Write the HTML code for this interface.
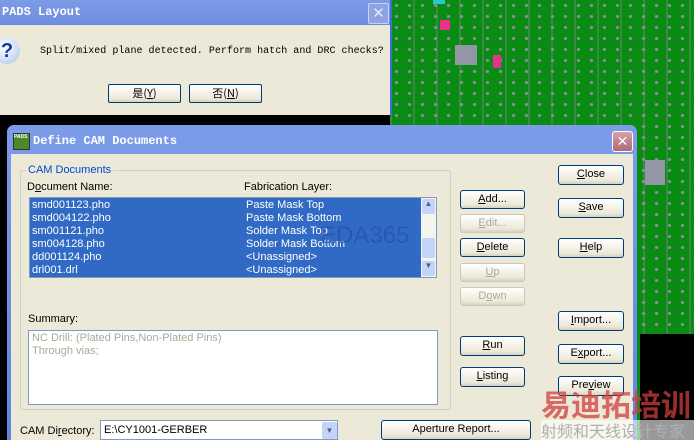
<!DOCTYPE html><html style="overflow:hidden;width:694px;height:440px"><head><style>
body{margin:0;width:694px;height:440px;overflow:hidden;position:relative;background:#000;font-family:"Liberation Sans",sans-serif;font-size:11px}
.a{position:absolute;white-space:nowrap}
.pcb{left:390px;top:0;width:304px;height:440px;background:#0a8c14;background-image:radial-gradient(#8a8f9a 1.5px,transparent 2px),linear-gradient(90deg,rgba(140,140,150,.35) 2px,transparent 2px);background-size:13px 11px,23px 19px}
.btn{position:absolute;background:linear-gradient(#fff,#ece9d8 80%,#d6d0c0);border:1px solid #003c74;border-radius:3px;text-align:center;font-size:11px;color:#000;box-sizing:border-box;line-height:17px;white-space:nowrap}
.dis{color:#aca899;border-color:#c9c7ba}
.mono{font-family:"Liberation Mono",monospace}
</style></head><body>
<div class="a pcb"></div>
<div class="a" style="left:433px;top:0;width:12px;height:4px;background:#2cc"></div>
<div class="a" style="left:440px;top:20px;width:10px;height:10px;background:#e83090"></div>
<div class="a" style="left:493px;top:55px;width:8px;height:13px;background:#e83090"></div>
<div class="a" style="left:455px;top:45px;width:22px;height:20px;background:#9595a8"></div>
<div class="a" style="left:645px;top:160px;width:20px;height:25px;background:#9595a8"></div>
<div class="a" style="left:640px;top:334px;width:54px;height:106px;background:#000"></div>
<!-- PADS dialog -->
<div class="a" style="left:0;top:0;width:390px;height:115px;background:#ece9d8;border-right:2px solid #3a6ed8"></div>
<div class="a mono" style="left:0;top:0;width:388px;height:25px;background:linear-gradient(#7e9be6,#6f8de0);color:#fff;font-weight:bold;font-size:12px;line-height:25px;padding-left:2px">PADS Layout</div>
<div class="a" style="left:368px;top:3px;width:19px;height:19px;background:#8ea4e0;border:1px solid #c8d4f4;border-radius:2px;color:#e4e8f8;text-align:center;line-height:19px;font-size:15px">✕</div>
<div class="a" style="left:-6px;top:38px;width:26px;height:26px;border-radius:50%;background:radial-gradient(circle at 40% 35%,#fff,#a8c4ec);color:#1a3a9a;font-weight:bold;font-size:20px;line-height:26px;text-align:center">?</div>
<div class="a mono" style="left:40px;top:46px;font-size:10px;letter-spacing:0.03px">Split/mixed plane detected. Perform hatch and DRC checks?</div>
<div class="btn" style="left:108px;top:84px;width:73px;height:19px;border-radius:2px;font-family:'Noto Sans CJK SC',sans-serif">是(<u>Y</u>)</div>
<div class="btn" style="left:189px;top:84px;width:73px;height:19px;border-radius:2px;font-family:'Noto Sans CJK SC',sans-serif">否(<u>N</u>)</div>
<!-- CAM dialog -->
<div class="a" style="left:7px;top:125px;width:630px;height:315px;background:linear-gradient(#7c9ce8,#5f86e0);border-radius:7px 7px 0 0"></div>
<div class="a" style="left:11px;top:154px;width:622px;height:286px;background:#ece9d8"></div>
<div class="a" style="left:13px;top:133px;width:15px;height:15px;background:#4a8a2a;border:1px solid #333;font-size:5px;color:#fff;font-weight:bold">PADS</div>
<div class="a mono" style="left:33px;top:134px;color:#fff;font-weight:bold;font-size:12px">Define CAM Documents</div>
<div class="a" style="left:612px;top:131px;width:19px;height:19px;background:linear-gradient(#d8a0a8,#b06878);border:1px solid #fff;border-radius:3px;color:#fff;text-align:center;line-height:19px;font-size:14px">✕</div>
<div class="a" style="left:20px;top:170px;width:429px;height:238px;border:1px solid #d0d0bf;border-radius:3px"></div>
<div class="a" style="left:26px;top:164px;background:#ece9d8;color:#0046d5;padding:0 2px">CAM Documents</div>
<div class="a" style="left:27px;top:181px">D<u>o</u>cument Name:</div>
<div class="a" style="left:244px;top:181px">Fabrication Layer:</div>
<div class="a" style="left:29px;top:197px;width:408px;height:81px;background:#316ac5;border:1px solid #7f9db9;box-sizing:border-box"></div>
<div class="a" style="left:32px;top:199px;color:#fff;line-height:13px">smd001123.pho<br>smd004122.pho<br>sm001121.pho<br>sm004128.pho<br>dd001124.pho<br>drl001.drl</div>
<div class="a" style="left:246px;top:199px;color:#fff;line-height:13px">Paste Mask Top<br>Paste Mask Bottom<br>Solder Mask Top<br>Solder Mask Bottom<br>&lt;Unassigned&gt;<br>&lt;Unassigned&gt;</div>
<div class="a" style="left:320px;top:222px;color:rgba(40,80,170,.7);font-size:24px">EDA365</div>
<div class="a" style="left:421px;top:198px;width:15px;height:79px;background:#f4f4ee"></div>
<div class="a" style="left:422px;top:199px;width:13px;height:15px;background:#c4d4f8;border-radius:2px;font-size:8px;text-align:center;color:#4d6185">▲</div>
<div class="a" style="left:422px;top:238px;width:13px;height:20px;background:#c4d4f8;border-radius:2px"></div>
<div class="a" style="left:422px;top:261px;width:13px;height:15px;background:#c4d4f8;border-radius:2px;font-size:8px;text-align:center;color:#4d6185">▼</div>
<div class="a" style="left:28px;top:313px">Summary:</div>
<div class="a" style="left:28px;top:330px;width:410px;height:75px;background:#fff;border:1px solid #7f9db9;box-sizing:border-box;color:#aca899;padding:1px 3px;line-height:13px">NC Drill: (Plated Pins,Non-Plated Pins)<br>Through vias;</div>
<div class="btn" style="left:460px;top:190px;width:65px;height:19px"><u>A</u>dd...</div>
<div class="btn dis" style="left:460px;top:214px;width:65px;height:19px"><u>E</u>dit...</div>
<div class="btn" style="left:460px;top:238px;width:65px;height:19px"><u>D</u>elete</div>
<div class="btn dis" style="left:460px;top:263px;width:65px;height:19px"><u>U</u>p</div>
<div class="btn dis" style="left:460px;top:287px;width:65px;height:19px">D<u>o</u>wn</div>
<div class="btn" style="left:460px;top:336px;width:65px;height:20px"><u>R</u>un</div>
<div class="btn" style="left:460px;top:367px;width:65px;height:20px"><u>L</u>isting</div>
<div class="btn" style="left:558px;top:165px;width:66px;height:20px"><u>C</u>lose</div>
<div class="btn" style="left:558px;top:198px;width:66px;height:20px"><u>S</u>ave</div>
<div class="btn" style="left:558px;top:238px;width:66px;height:20px"><u>H</u>elp</div>
<div class="btn" style="left:558px;top:311px;width:66px;height:20px"><u>I</u>mport...</div>
<div class="btn" style="left:558px;top:344px;width:66px;height:20px">E<u>x</u>port...</div>
<div class="btn" style="left:558px;top:376px;width:66px;height:20px">Pre<u>v</u>iew</div>
<div class="a" style="left:20px;top:425px">CAM Di<u>r</u>ectory:</div>
<div class="a" style="left:100px;top:420px;width:238px;height:20px;background:#fff;border:1px solid #7f9db9;box-sizing:border-box;padding:3px 3px">E:\CY1001-GERBER</div>
<div class="a" style="left:322px;top:422px;width:15px;height:17px;background:#c4d4f8;border-radius:2px;font-size:8px;text-align:center;line-height:17px;color:#4d6185">▼</div>
<div class="btn" style="left:381px;top:420px;width:150px;height:20px">Aperture Report...</div>
<div class="a" style="left:541px;top:386px;color:rgba(210,60,60,.75);font-size:30px;font-weight:bold;font-family:'Noto Sans CJK SC',sans-serif;line-height:34px">易迪拓培训</div>
<div class="a" style="left:541px;top:420px;width:153px;height:20px;color:#b0b0b0;font-size:16px;font-family:'Noto Sans CJK SC',sans-serif;line-height:20px;background:rgba(255,255,255,.6);overflow:hidden">射频和天线设计专家</div>
</body></html>
